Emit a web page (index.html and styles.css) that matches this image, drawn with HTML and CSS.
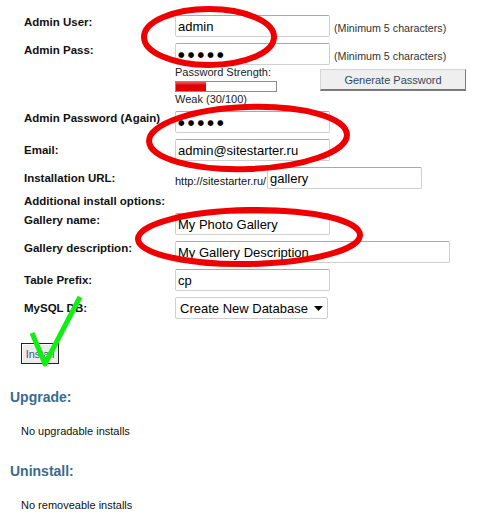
FILE: index.html
```html
<!DOCTYPE html>
<html>
<head>
<meta charset="utf-8">
<link rel="stylesheet" href="styles.css">
</head>
<body>
<div class="page">
  <div class="form">
    <div class="row">
      <div class="lbl lbl-top">Admin User:</div>
      <div class="fld fld-inline">
        <input class="txt" type="text" value="admin">
        <span class="hint">(Minimum 5 characters)</span>
      </div>
    </div>
    <div class="row">
      <div class="lbl lbl-top">Admin Pass:</div>
      <div class="fld fld-col">
        <div class="fld-inline">
          <input class="txt pw" type="text" value="●●●●●">
          <span class="hint">(Minimum 5 characters)</span>
        </div>
        <div class="pw-tools">
          <div class="strength">
            <div class="strength-title">Password Strength:</div>
            <div class="bar"><div class="bar-fill" style="width:30%"></div></div>
            <div class="strength-val">Weak (30/100)</div>
          </div>
          <button class="gen-btn" type="button">Generate Password</button>
        </div>
      </div>
    </div>
    <div class="row">
      <div class="lbl lbl-top">Admin Password (Again)</div>
      <div class="fld"><input class="txt pw" type="text" value="●●●●●"></div>
    </div>
    <div class="row">
      <div class="lbl lbl-mid">Email:</div>
      <div class="fld"><input class="txt" type="text" value="admin@sitestarter.ru"></div>
    </div>
    <div class="row">
      <div class="lbl lbl-mid">Installation URL:</div>
      <div class="fld fld-inline">
        <span class="url-base">http://sitestarter.ru/</span>
        <input class="txt" type="text" value="gallery">
      </div>
    </div>
    <div class="row row-sub">
      <div class="lbl lbl-wide">Additional install options:</div>
    </div>
    <div class="row">
      <div class="lbl lbl-top">Gallery name:</div>
      <div class="fld"><input class="txt" type="text" value="My Photo Gallery"></div>
    </div>
    <div class="row">
      <div class="lbl lbl-top">Gallery description:</div>
      <div class="fld"><input class="txt txt-wide" type="text" value="My Gallery Description"></div>
    </div>
    <div class="row">
      <div class="lbl lbl-mid">Table Prefix:</div>
      <div class="fld"><input class="txt" type="text" value="cp"></div>
    </div>
    <div class="row">
      <div class="lbl lbl-mid">MySQL DB:</div>
      <div class="fld">
        <div class="sel-wrap">
          <select class="sel"><option>Create New Database</option></select>
          <svg class="sel-arrow" width="9" height="5" viewBox="0 0 9 5"><path d="M0 0H9L4.5 5Z" fill="#000"/></svg>
        </div>
      </div>
    </div>
  </div>

  <button class="install-btn" type="button">Install</button>

  <h2 class="sec-title">Upgrade:</h2>
  <p class="sec-text">No upgradable installs</p>
  <h2 class="sec-title">Uninstall:</h2>
  <p class="sec-text">No removeable installs</p>

  <svg class="marks" width="480" height="519" viewBox="0 0 480 519">
    <ellipse cx="209" cy="37" rx="65" ry="28" fill="none" stroke="#ee0000" stroke-width="6"/>
    <ellipse cx="248" cy="138" rx="99" ry="31" transform="rotate(-2 248 138)" fill="none" stroke="#ee0000" stroke-width="6"/>
    <ellipse cx="249" cy="237" rx="111" ry="27" transform="rotate(-1 249 237)" fill="none" stroke="#ee0000" stroke-width="6"/>
    <path d="M32 333 L45 364 L80 297" fill="none" stroke="#11ee11" stroke-width="5" stroke-linejoin="round"/>
  </svg>
</div>
</body>
</html>
```
FILE: styles.css
```css
* { box-sizing: border-box; }
html, body { margin: 0; padding: 0; background: #fff; }
body {
  font-family: "Liberation Sans", Arial, sans-serif;
  color: #000;
  width: 480px;
  height: 519px;
  overflow: hidden;
}
.page {
  position: relative;
  width: 480px;
  height: 519px;
  padding-top: 15px;
}
.form {
  display: flex;
  flex-direction: column;
  gap: 6px;
}
.row {
  display: flex;
  align-items: flex-start;
}
.lbl {
  width: 175px;
  padding-left: 24px;
  font-weight: bold;
  font-size: 11.5px;
  line-height: 13px;
  color: #111;
  white-space: nowrap;
}
.lbl-top { padding-top: 1px; }
.lbl-mid { align-self: center; }
.row-sub { height: 12px; }
.row-sub .lbl { line-height: 12px; width: auto; }
.fld { display: flex; }
.fld-inline {
  display: flex;
  align-items: flex-end;
}
.fld-col {
  display: flex;
  flex-direction: column;
}
.txt {
  width: 155px;
  height: 22px;
  margin: 0;
  padding: 0 2px;
  border: 1px solid #cfcfcf;
  border-top-color: #a9a9a9;
  border-radius: 2px;
  background: #fff;
  font-family: "Liberation Sans", Arial, sans-serif;
  font-size: 13px;
  color: #000;
  outline: none;
}
.txt-wide { width: 275px; }
.pw {
  font-family: "DejaVu Sans", sans-serif;
  font-size: 7.5px;
  letter-spacing: 3.2px;
}
.hint {
  margin-left: 4px;
  padding-bottom: 2px;
  font-size: 10.7px;
  line-height: 13px;
  color: #333;
  white-space: nowrap;
}
.pw-tools {
  display: flex;
  align-items: flex-start;
}
.strength {
  width: 145px;
  font-size: 11px;
  color: #222;
}
.strength-title { margin-top: 1px; line-height: 13px; }
.bar {
  margin-top: 2px;
  width: 102px;
  height: 11px;
  border: 1px solid #8c8c8c;
  background: #fff;
}
.bar-fill {
  height: 100%;
  background: linear-gradient(#f06060, #e00000 35%, #dd0000);
}
.strength-val { margin-top: 1px; line-height: 12px; }
.gen-btn {
  margin-top: 4px;
  width: 146px;
  height: 22px;
  padding: 0;
  border: 1px solid #d4d4d4;
  border-right-color: #7a7a7a;
  border-bottom: 2px solid #7a7a7a;
  background: #efefef;
  font-family: "Liberation Sans", Arial, sans-serif;
  font-size: 11px;
  color: #2e4a62;
}
.url-base {
  width: 92px;
  padding-bottom: 1px;
  font-size: 11px;
  line-height: 13px;
  color: #111;
  white-space: nowrap;
}
.sel-wrap {
  position: relative;
  width: 153px;
  height: 22px;
}
.sel {
  appearance: none;
  -webkit-appearance: none;
  width: 153px;
  height: 22px;
  margin: 0;
  padding: 0 0 0 4px;
  border: 1px solid #cfcfcf;
  border-radius: 2px;
  background: #fff;
  font-family: "Liberation Sans", Arial, sans-serif;
  font-size: 13px;
  color: #000;
}
.sel-arrow {
  position: absolute;
  right: 5px;
  top: 9px;
}
.install-btn {
  display: block;
  margin: 24px 0 0 21px;
  width: 38px;
  height: 21px;
  padding: 0;
  border: 1px solid #222;
  box-shadow: inset 1px 1px 0 #fff;
  background: #ececec;
  font-family: "Liberation Sans", Arial, sans-serif;
  font-size: 11px;
  color: #3a5a7a;
}
.sec-title {
  margin: 25px 0 19px 10px;
  font-size: 14px;
  line-height: 17px;
  font-weight: bold;
  color: #3a6a90;
}
.sec-text {
  margin: 0 0 0 21px;
  font-size: 11px;
  line-height: 13px;
  color: #111;
}
.marks {
  position: absolute;
  left: 0;
  top: 0;
  pointer-events: none;
}
```
